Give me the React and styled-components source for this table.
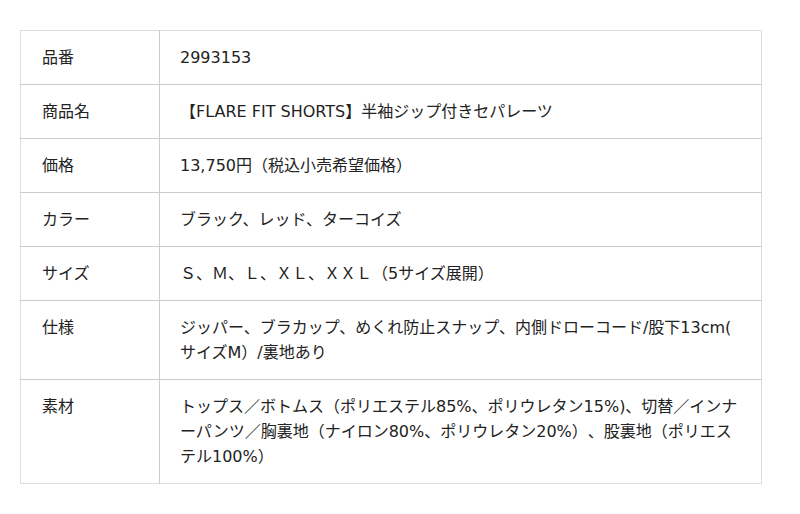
import React from 'react';
import styled, {createGlobalStyle} from 'styled-components';

const GlobalStyle = createGlobalStyle`
    body {
        margin: 0;
        background: #fff;
        font-family: "DejaVu Sans", "Noto Sans CJK JP", sans-serif;
        color: #222;
    }
`;

const Page = styled.div`
    padding: 30px 38px 30px 20px;
`;

const SpecTable = styled.table`
    width: 742px;
    border-collapse: collapse;
    border: 1px solid #ddd;
    font-size: 16px;
    line-height: 25px;
    text-spacing-trim: space-all;
`;

const Row = styled.tr`
    border-bottom: 1px solid #ccc;
    &:last-child {
        border-bottom: 1px solid #ddd;
    }
`;

const Label = styled.th`
    width: 97px;
    padding: 14px 20px 14px 21px;
    border-right: 1px solid #ccc;
    text-align: left;
    vertical-align: top;
    font-weight: normal;
`;

const Value = styled.td`
    padding: 14px 20px 14px 20px;
    vertical-align: top;
    line-break: anywhere;
`;

const specs = [
    ['品番', '2993153'],
    ['商品名', '【FLARE FIT SHORTS】半袖ジップ付きセパレーツ'],
    ['価格', '13,750円（税込小売希望価格）'],
    ['カラー', 'ブラック、レッド、ターコイズ'],
    ['サイズ', 'Ｓ、Ｍ、Ｌ、ＸＬ、ＸＸＬ（5サイズ展開）'],
    ['仕様', 'ジッパー、ブラカップ、めくれ防止スナップ、内側ドローコード/股下13cm(サイズM）/裏地あり'],
    ['素材', 'トップス／ボトムス（ポリエステル85%、ポリウレタン15%)、切替／インナーパンツ／胸裏地（ナイロン80%、ポリウレタン20%）、股裏地（ポリエステル100%）']
];

export default function App() {
    return (
        <Page>
            <GlobalStyle />
            <SpecTable>
                <tbody>
                    {specs.map(([label, value]) => (
                        <Row key={label}>
                            <Label>{label}</Label>
                            <Value>{value}</Value>
                        </Row>
                    ))}
                </tbody>
            </SpecTable>
        </Page>
    );
}
